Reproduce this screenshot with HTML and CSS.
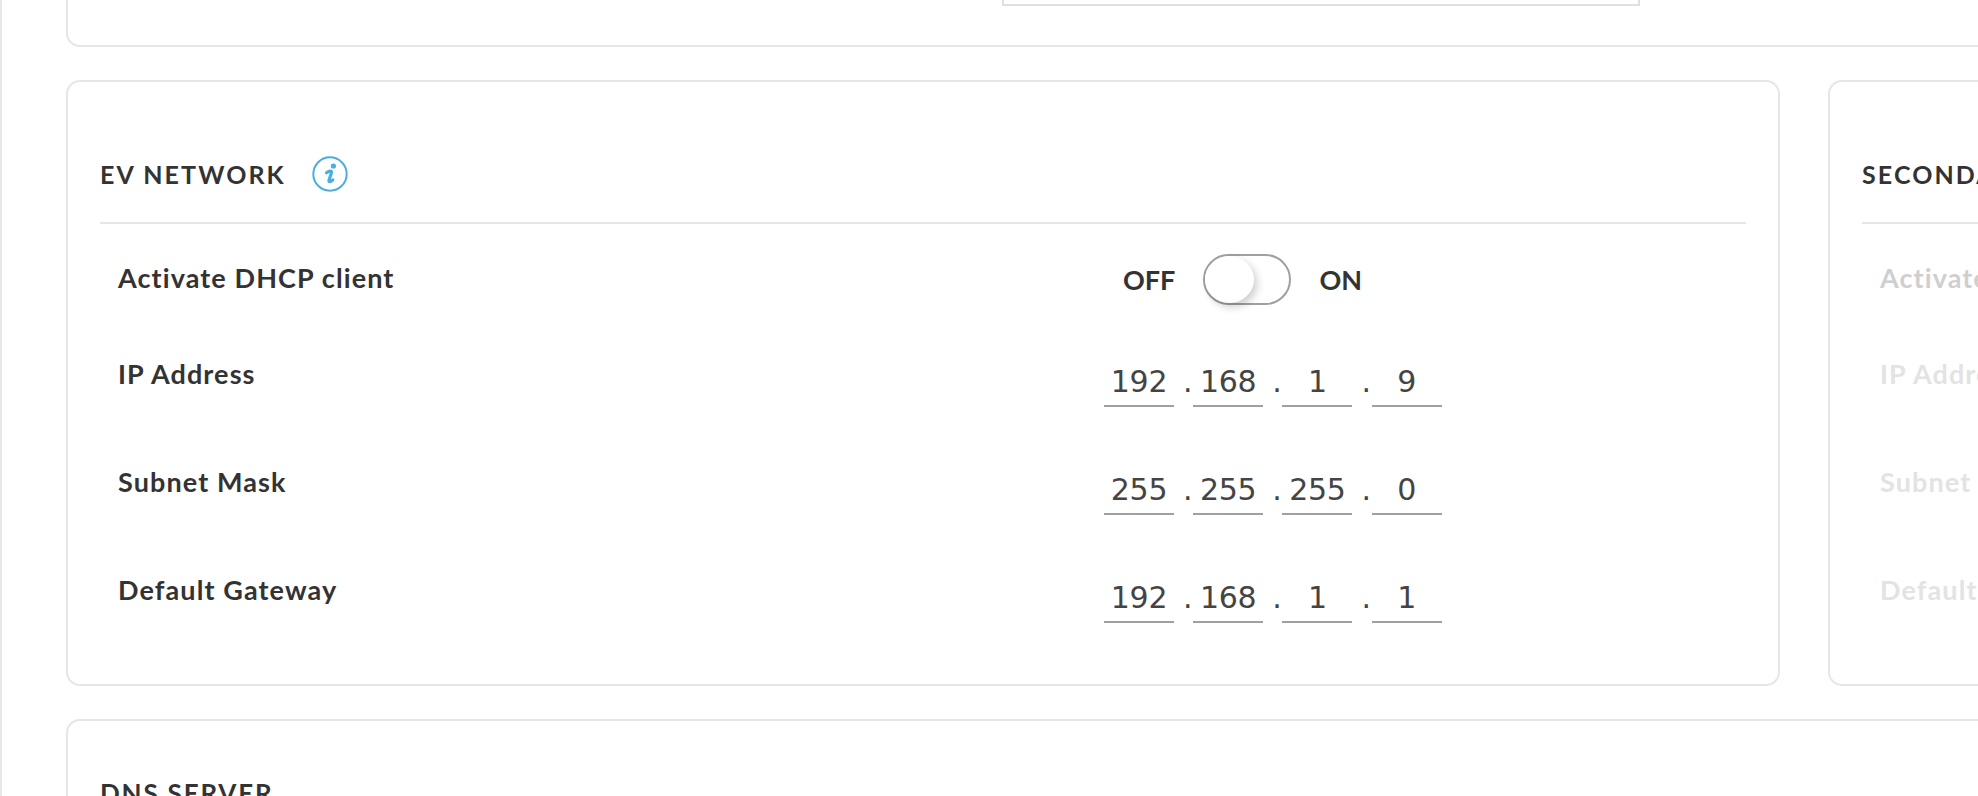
FILE: index.html
```html
<!DOCTYPE html>
<html lang="en">
<head>
<meta charset="utf-8">
<title>Network settings</title>
<link rel="stylesheet" href="styles.css">
</head>
<body>
<div class="page">
  <div class="rail"></div>
  <main class="content">
    <section class="card card-top">
      <div class="top-input"></div>
    </section>
    <div class="card-row">
      <section class="card card-net">
        <header class="card-head">
          <h2 class="title">EV NETWORK</h2>
          <svg class="info" viewBox="0 0 36 36" aria-hidden="true">
            <circle cx="18" cy="18" r="16.7" fill="none" stroke="#4aaede" stroke-width="2"/>
            <circle cx="21.4" cy="10" r="2.6" fill="#4aaede"/>
            <path d="M14.500 16.800c1.500-1.100 2.900-1.700 4.100-1.600 1 .1 1 1 .7 2l-2.300 7c-.3 1.100.1 1.600 1 1.400 1-.2 2-.9 2.900-1.700" fill="none" stroke="#4aaede" stroke-width="3.200" stroke-linecap="round" stroke-linejoin="round"/>
          </svg>
        </header>
        <div class="row row-toggle">
          <span class="label">Activate DHCP client</span>
          <div class="toggle-group">
            <span class="state">OFF</span>
            <span class="toggle"><span class="knob"></span></span>
            <span class="state">ON</span>
          </div>
        </div>
        <div class="row">
          <span class="label">IP Address</span>
          <div class="ip"><span class="oct">192</span><span class="dot">.</span><span class="oct">168</span><span class="dot">.</span><span class="oct">1</span><span class="dot">.</span><span class="oct">9</span></div>
        </div>
        <div class="row">
          <span class="label">Subnet Mask</span>
          <div class="ip"><span class="oct">255</span><span class="dot">.</span><span class="oct">255</span><span class="dot">.</span><span class="oct">255</span><span class="dot">.</span><span class="oct">0</span></div>
        </div>
        <div class="row">
          <span class="label">Default Gateway</span>
          <div class="ip"><span class="oct">192</span><span class="dot">.</span><span class="oct">168</span><span class="dot">.</span><span class="oct">1</span><span class="dot">.</span><span class="oct">1</span></div>
        </div>
      </section>
      <section class="card card-net card-off">
        <header class="card-head">
          <h2 class="title">SECONDARY NETWORK</h2>
        </header>
        <div class="row row-toggle"><span class="label label-dim">Activate DHCP client</span></div>
        <div class="row"><span class="label label-faint">IP Address</span></div>
        <div class="row"><span class="label label-faint">Subnet Mask</span></div>
        <div class="row"><span class="label label-faint">Default Gateway</span></div>
      </section>
    </div>
    <section class="card card-dns">
      <h2 class="title title-dns">DNS SERVER</h2>
    </section>
  </main>
</div>
</body>
</html>
```
FILE: styles.css
```css
* { box-sizing: border-box; }
html, body { margin: 0; height: 100%; }
body {
  background: #fff;
  color: #333;
  font-family: "Lato", "Noto Sans", sans-serif;
  overflow: hidden;
}
.page { display: flex; height: 796px; overflow: hidden; }
.rail { flex: 0 0 2px; background: #e8e8e8; }
.content {
  flex: 0 0 auto;
  width: 1976px;
  padding-left: 64px;
  display: flex;
  flex-direction: column;
  gap: 33px;
  overflow: hidden;
}
.card {
  border: 2px solid #e6e6e6;
  border-radius: 14px;
  background: #fff;
  flex: 0 0 auto;
}
.card-top {
  height: 47px;
  width: 2000px;
  border-top: 0;
  border-top-left-radius: 0;
  border-top-right-radius: 0;
  padding-left: 934px;
}
.top-input {
  width: 638px;
  height: 6px;
  border: 2px solid #e0e0e0;
  border-top: 0;
}
.card-row { display: flex; gap: 48px; flex: 0 0 auto; }
.card-net {
  flex: 0 0 1714px;
  height: 606px;
  padding: 0 32px;
}
.card-head {
  height: 142px;
  padding-top: 74px;
  border-bottom: 2px solid #e6e6e6;
  display: flex;
  align-items: flex-start;
  gap: 26px;
}
.title {
  margin: 0;
  font-size: 25px;
  line-height: 36px;
  font-weight: 700;
  letter-spacing: 2.1px;
  color: #333;
  white-space: nowrap;
}
.info { width: 36px; height: 36px; flex: none; }
.row {
  display: flex;
  align-items: flex-start;
  height: 108px;
  padding-left: 18px;
}
.row-toggle { height: 133px; padding-top: 30px; }
.label {
  flex: 0 0 986px;
  font-size: 27px;
  line-height: 34px;
  font-weight: 700;
  letter-spacing: 1.1px;
  white-space: nowrap;
  color: #333;
}
.row-toggle .label { padding-top: 7px; }
.label-dim { color: #cfcfcf; }
.label-faint { color: #e3e3e3; }
.toggle-group {
  display: flex;
  align-items: center;
  padding-left: 19px;
  height: 51px;
  gap: 28px;
}
.state { font-size: 27px; font-weight: 700; color: #333; line-height: 34px; }
.toggle {
  display: block;
  width: 88px;
  height: 51px;
  border: 2px solid #a0a0a0;
  border-radius: 26px;
  background: #fff;
}
.knob {
  display: block;
  width: 49px;
  height: 47px;
  border-radius: 50%;
  background: #fff;
  box-shadow: 3px 4px 8px rgba(0,0,0,.2);
}
.ip { display: flex; align-items: flex-start; }
.oct {
  width: 70px;
  height: 50px;
  border-bottom: 2px solid #a0a0a0;
  text-align: center;
  font-family: "DejaVu Sans", sans-serif;
  font-size: 30px;
  letter-spacing: -.3px;
  line-height: 49px;
  color: #444;
}
.dot {
  width: 19.2px;
  height: 50px;
  text-indent: 9px;
  font-family: "DejaVu Sans", sans-serif;
  font-size: 30px;
  line-height: 49px;
  color: #444;
}
.card-dns {
  width: 2000px;
  height: 120px;
  padding: 54px 32px 0;
}
.title-dns { font-size: 26px; letter-spacing: 1.800px; }
```
